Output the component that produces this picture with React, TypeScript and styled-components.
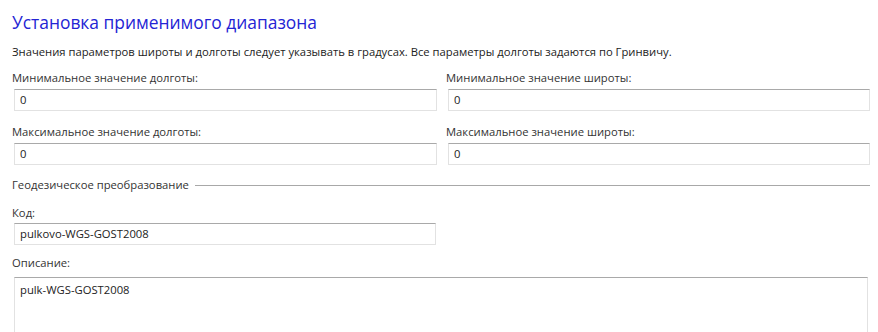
import React from "react";
import styled, { createGlobalStyle } from "styled-components";

const Global = createGlobalStyle`
  html, body { margin: 0; padding: 0; background: #ffffff; }
  body { font-family: "Open Sans", "Noto Sans", sans-serif; color: #222; }
`;

const Page = styled.div`
  width: 878px;
  height: 332px;
  overflow: hidden;
  box-sizing: border-box;
  padding: 10px 8px 0 12px;
  font-size: 11.25px;
`;

const Title = styled.h1`
  margin: 0;
  font-weight: 400;
  font-size: 17.4px;
  line-height: 24px;
  color: #2424d4;
`;

const Note = styled.p`
  margin: 10px 0 0;
  font-size: 11.25px;
  line-height: 16px;
  color: #222;
`;

const Grid = styled.div`
  display: grid;
  grid-template-columns: 425px 424px;
  column-gap: 9px;
  row-gap: 13px;
  margin-top: 10px;
`;

const Field = styled.div`
  display: flex;
  flex-direction: column;
`;

const Label = styled.label<{ $gap?: number }>`
  font-size: 11.25px;
  line-height: 16px;
  color: #333;
  margin-bottom: ${(p) => p.$gap ?? 3}px;
`;

const Input = styled.div<{ $width?: number }>`
  box-sizing: border-box;
  margin-left: 2px;
  height: 22px;
  ${(p) => (p.$width ? `width: ${p.$width}px;` : "")}
  border: 1px solid #e2e2e2;
  border-top-color: #a9a9a9;
  padding: 0 5px;
  font-size: 11.25px;
  line-height: 20px;
  color: #222;
`;

const TextArea = styled(Input)`
  height: 80px;
  padding-top: 4px;
  line-height: 16px;
`;

const Separator = styled.div`
  display: flex;
  align-items: center;
  gap: 6px;
  margin-top: 12px;
  font-size: 11.25px;
  line-height: 16px;
  color: #333;
  width: 858px;
  &::after {
    content: "";
    flex: 1;
    height: 1px;
    background: #a8a8a8;
  }
`;

const Stack = styled.div`
  display: flex;
  flex-direction: column;
  gap: 10px;
  margin-top: 12px;
`;

export default function App() {
  return (
    <Page>
      <Global />
      <Title>Установка применимого диапазона</Title>
      <Note>
        Значения параметров широты и долготы следует указывать в градусах. Все параметры долготы задаются по Гринвичу.
      </Note>
      <Grid>
        <Field>
          <Label>Минимальное значение долготы:</Label>
          <Input>0</Input>
        </Field>
        <Field>
          <Label>Минимальное значение широты:</Label>
          <Input>0</Input>
        </Field>
        <Field>
          <Label>Максимальное значение долготы:</Label>
          <Input>0</Input>
        </Field>
        <Field>
          <Label>Максимальное значение широты:</Label>
          <Input>0</Input>
        </Field>
      </Grid>
      <Separator>Геодезическое преобразование</Separator>
      <Stack>
        <Field>
          <Label $gap={2}>Код:</Label>
          <Input $width={422}>pulkovo-WGS-GOST2008</Input>
        </Field>
        <Field>
          <Label $gap={6}>Описание:</Label>
          <TextArea $width={854}>pulk-WGS-GOST2008</TextArea>
        </Field>
      </Stack>
    </Page>
  );
}
